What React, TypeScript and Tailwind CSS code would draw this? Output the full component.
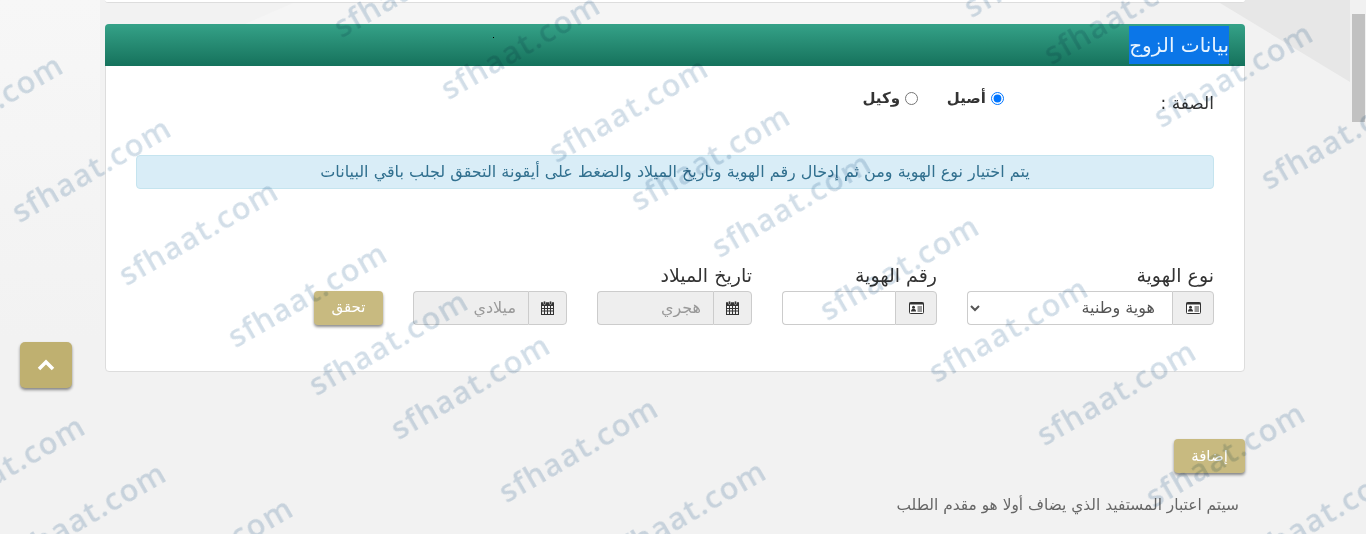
const MARKS: [number, number][] = [
  [-100, 157], [8, 220], [115, 283], [224, 345], [305, 393], [387, 437], [495, 500], [603, 563],
  [330, 35], [437, 97], [545, 160], [627, 208], [708, 255], [816, 318], [925, 380], [1033, 443], [1142, 505], [1240, 565],
  [960, 15], [1040, 62], [1150, 125], [1257, 187],
  [-78, 518], [3, 565], [130, 600], [1310, 590],
];

const CardIcon = () => (
  <svg width="15" height="12" viewBox="0 0 15 12" className="text-[#333]">
    <rect x="0.5" y="0.5" width="14" height="11" rx="1" fill="#fff" stroke="currentColor" />
    <rect x="0.5" y="0.5" width="14" height="2" fill="currentColor" />
    <circle cx="4.5" cy="5.2" r="1.5" fill="currentColor" />
    <path d="M2 9.5c0-2 1-2.5 2.5-2.5S7 7.500 7 9.500z" fill="currentColor" />
    <path d="M8.500 5h4.500M8.500 7h4.500M8.500 9h4.500" stroke="currentColor" />
  </svg>
);

const CalendarIcon = () => (
  <svg width="13" height="14" viewBox="0 0 13 14" className="text-[#333]">
    <rect x="0.500" y="2" width="12" height="11.500" fill="#eee" stroke="currentColor" />
    <rect x="0" y="1.500" width="13" height="3.500" fill="currentColor" />
    <rect x="2.500" y="0" width="2" height="3.500" rx="1" fill="currentColor" stroke="#eee" strokeWidth="0.500" />
    <rect x="8.500" y="0" width="2" height="3.500" rx="1" fill="currentColor" stroke="#eee" strokeWidth="0.500" />
    <path d="M0 7.500h13M0 10h13M3.500 5v8M6.500 5v8M9.500 5v8" stroke="currentColor" />
  </svg>
);

const Addon = ({ children, className }: { children: React.ReactNode; className: string }) => (
  <span className={`flex h-full shrink-0 items-center justify-center rounded-r-[4px] border border-[#ccc] bg-[#eee] ${className}`}>
    {children}
  </span>
);

const DateField = ({ placeholder }: { placeholder: string }) => (
  <div className="flex h-[34px] w-full">
    <Addon className="w-[39px]">
      <CalendarIcon />
    </Addon>
    <input
      disabled
      placeholder={placeholder}
      className="h-full min-w-0 flex-1 rounded-l-[4px] border border-r-0 border-[#ccc] bg-[#eee] px-3 text-base placeholder:text-[#999]"
    />
  </div>
);

const GoldButton = ({ children, className }: { children: React.ReactNode; className: string }) => (
  <button className={`flex items-center justify-center rounded-[4px] bg-[#c8ba80] text-[15px] font-normal text-white shadow-[0_2px_3px_rgba(0,0,0,0.45)] ${className}`}>
    {children}
  </button>
);

export default function App() {
  return (
    <div className="relative flex h-[534px] w-[1366px] overflow-hidden bg-[#f2f2f2] font-['DejaVu_Sans',sans-serif] text-[#333]">
      <div className="absolute left-0 top-0 h-[340px] w-[100px] bg-gradient-to-b from-[#f7f7f7] to-[#f2f2f2]" />
      <svg className="absolute left-0 top-0" width="1350" height="90">
        <polygon points="1215,0 1350,0 1350,82" fill="#e7e7e7" />
        <polygon points="245,24 300,0 1100,0 1100,24" fill="#f5f5f5" />
      </svg>

      <main dir="rtl" className="relative w-[1350px] shrink-0">
        <div className="mx-auto w-[1140px]">
          <div className="h-[3px] rounded-b-[4px] border-b border-[#ddd] bg-white" />

          <section className="mt-[21px] h-[348px] rounded-[4px] border border-[#ddd] bg-white">
            <header className="-mx-px -mt-px flex h-[42px] items-start rounded-t-[4px] bg-gradient-to-b from-[#35a288] to-[#15725c] pr-[16px] pt-[2px]">
              <h2 className="flex h-[38px] items-center bg-[#0b76e8] text-[20px] font-normal text-[#e8f4ff]">بيانات الزوج</h2>
            </header>

            <div className="flex pr-[30px] pt-[21px]">
              <span className="mt-[4px] w-[210px] text-[17px]">الصفة :</span>
              <label className="flex w-[86px] items-center gap-[5px] self-start text-[15px] font-bold">
                <input type="radio" name="role" defaultChecked className="m-0 h-[13px] w-[13px]" />
                أصيل
              </label>
              <label className="flex items-center gap-[5px] self-start text-[15px] font-bold">
                <input type="radio" name="role" className="m-0 h-[13px] w-[13px]" />
                وكيل
              </label>
            </div>

            <div className="mx-[30px] mt-[38px] flex h-[34px] items-center justify-center rounded-[4px] border border-[#c5e4ef] bg-[#d9edf7] text-base text-[#31708f]">
              يتم اختيار نوع الهوية ومن ثم إدخال رقم الهوية وتاريخ الميلاد والضغط على أيقونة التحقق لجلب باقي البيانات
            </div>

            <div className="mt-[75px] flex items-end gap-[30px] pr-[30px]">
              <div className="w-[247px]">
                <label className="mb-[5px] block text-[19px] leading-[22px]">نوع الهوية</label>
                <div className="flex h-[34px]">
                  <Addon className="w-[42px]">
                    <CardIcon />
                  </Addon>
                  <select className="h-full min-w-0 flex-1 rounded-l-[4px] border border-r-0 border-[#ccc] bg-white pl-2 pr-[13px] text-base text-[#555]">
                    <option>هوية وطنية</option>
                  </select>
                </div>
              </div>

              <div className="w-[155px]">
                <label className="mb-[5px] block text-[19px] leading-[22px]">رقم الهوية</label>
                <div className="flex h-[34px]">
                  <Addon className="w-[42px]">
                    <CardIcon />
                  </Addon>
                  <input className="h-full min-w-0 flex-1 rounded-l-[4px] border border-r-0 border-[#ccc] bg-white px-3 text-sm" />
                </div>
              </div>

              <div className="w-[155px]">
                <label className="mb-[5px] block text-[19px] leading-[22px]">تاريخ الميلاد</label>
                <DateField placeholder="هجري" />
              </div>

              <div className="w-[154px]">
                <DateField placeholder="ميلادي" />
              </div>

              <GoldButton className="h-[34px] w-[69px]">تحقق</GoldButton>
            </div>
          </section>

          <div className="mt-[67px] flex justify-start">
            <GoldButton className="h-[34px] w-[71px]">إضافة</GoldButton>
          </div>

          <p className="mr-[6px] mt-[21px] text-[15.400px] text-[#666]">سيتم اعتبار المستفيد الذي يضاف أولا هو مقدم الطلب</p>
        </div>
      </main>

      <div className="relative w-4 shrink-0 bg-[#f1f1f1] pt-[14px]">
        <div className="mx-auto h-[108px] w-[13px] bg-[#c1c1c1]" />
      </div>

      <button className="absolute left-[20px] top-[342px] flex h-[46px] w-[52px] items-center justify-center rounded-[5px] bg-[#bfb070] shadow-[0_2px_3px_rgba(0,0,0,0.45)]">
        <svg width="18" height="12" viewBox="0 0 18 12">
          <path d="M2 10l7-7 7 7" fill="none" stroke="#fff" strokeWidth="3.500" />
        </svg>
      </button>

      <span className="absolute left-[493px] top-[37px] h-px w-px bg-black" />

      <div className="pointer-events-none absolute inset-0 mix-blend-multiply">
        {MARKS.map(([x, y]) => (
          <span
            key={`${x}-${y}`}
            style={{ left: x + 14, top: y - 26 }}
            className="absolute h-[34px] origin-bottom-left -rotate-30 whitespace-nowrap font-['Open_Sans',sans-serif] text-[31px] font-semibold leading-[34px] tracking-[1.200px] text-[#d2dee8] blur-[0.5px]"
          >
            sfhaat.com
          </span>
        ))}
      </div>
    </div>
  );
}
